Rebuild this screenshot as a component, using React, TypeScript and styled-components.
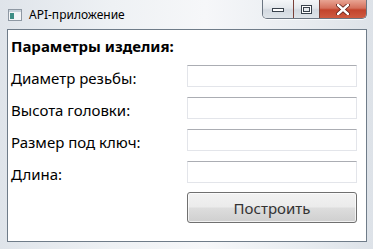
import React from "react";
import styled, { createGlobalStyle } from "styled-components";

const Global = createGlobalStyle`
  html, body { margin: 0; padding: 0; background: #ffffff; }
  body { font-family: "Noto Sans", "Open Sans", sans-serif; }
`;

const Window = styled.div`
  width: 373px;
  height: 249px;
  box-sizing: border-box;
  display: flex;
  flex-direction: column;
  background: linear-gradient(90deg, #dfe4ea 0%, #eef1f4 30%, #f6f7f9 55%, #e9edf1 80%, #dde2e8 100%);
  overflow: hidden;
`;

const TitleBar = styled.div`
  height: 29px;
  display: flex;
  align-items: flex-start;
  flex-shrink: 0;
`;

const AppIcon = styled.svg`
  margin: 9px 0 0 8px;
  flex-shrink: 0;
`;

const Title = styled.div`
  margin: 7px 0 0 7px;
  font-size: 12px;
  line-height: 16px;
  color: #000;
  flex: 1;
  white-space: nowrap;
`;

const Caption = styled.div`
  display: flex;
  margin-right: 6px;
  height: 18px;
  border: 1px solid #6b7581;
  border-top: none;
  border-radius: 0 0 5px 5px;
  overflow: hidden;
  box-shadow: 0 1px 0 rgba(255, 255, 255, 0.8);
`;

const CapButton = styled.div<{ $w: number; $close?: boolean }>`
  width: ${(p) => p.$w}px;
  height: 18px;
  display: flex;
  align-items: center;
  justify-content: center;
  box-sizing: border-box;
  border-left: ${(p) => (p.$close ? "1px solid #6b2a20" : "none")};
  background: ${(p) =>
    p.$close
      ? "linear-gradient(180deg, #e8a493 0%, #d5705c 45%, #c3442c 55%, #cf5b40 100%)"
      : "linear-gradient(180deg, #f4f6f8 0%, #e4e8ec 45%, #d3d9e0 55%, #dfe4e9 100%)"};
  & + & {
    border-left: 1px solid ${(p) => (p.$close ? "#7a4038" : "#8a939d")};
  }
`;

const Client = styled.div`
  margin: 0 6px 0 7px;
  height: 213px;
  box-sizing: border-box;
  border: 1px solid #6f7c89;
  background: #ffffff;
  display: grid;
  grid-template-columns: 1fr 170px;
  grid-template-rows: 25px repeat(4, 22px) 31px;
  row-gap: 10px;
  padding: 0 9px 0 3px;
  font-size: 15px;
  color: #000;
`;

const Heading = styled.div`
  grid-column: 1 / -1;
  font-weight: 700;
  line-height: 20px;
  padding-top: 6px;
`;

const Label = styled.label`
  align-self: center;
  line-height: 20px;
  padding-top: 3px;
  white-space: nowrap;
`;

const Field = styled.input`
  width: 170px;
  height: 22px;
  box-sizing: border-box;
  margin: 0;
  border: 1px solid #e3e5ea;
  border-top-color: #abadb3;
  background: #fff;
  outline: none;
  padding: 0 3px;
  font: inherit;
`;

const BuildButton = styled.button`
  grid-column: 2;
  margin: -1px 0 0 0;
  width: 170px;
  height: 31px;
  box-sizing: border-box;
  border: 1px solid #707070;
  border-radius: 3px;
  background: linear-gradient(180deg, #f2f2f2 0%, #ebebeb 48%, #dddddd 52%, #cfcfcf 100%);
  box-shadow: inset 0 0 0 1px rgba(255, 255, 255, 0.7);
  font-family: inherit;
  font-size: 15px;
  color: #333333;
  padding: 0;
  cursor: default;
`;

const rows = ["Диаметр резьбы:", "Высота головки:", "Размер под ключ:", "Длина:"];

export default function App() {
  return (
    <>
      <Global />
      <Window>
        <TitleBar>
          <AppIcon width="14" height="12" viewBox="0 0 14 12">
            <rect x="0.5" y="0.5" width="13" height="11" fill="#f4f6f8" stroke="#8e98a3" />
            <rect x="1" y="1" width="12" height="2" fill="#c9d3dc" />
            <rect x="2" y="4" width="4" height="6" fill="#3f8f86" />
          </AppIcon>
          <Title>API-приложение</Title>
          <Caption>
            <CapButton $w={30}>
              <svg width="12" height="6" viewBox="0 0 12 6">
                <rect x="0.5" y="2.5" width="11" height="3" fill="#fff" stroke="#39424c" />
              </svg>
            </CapButton>
            <CapButton $w={26}>
              <svg width="11" height="9" viewBox="0 0 11 9">
                <rect x="0.5" y="0.5" width="10" height="8" fill="#fff" stroke="#39424c" />
                <rect x="2.5" y="2.5" width="6" height="4" fill="#e6eaee" stroke="#39424c" />
              </svg>
            </CapButton>
            <CapButton $w={47} $close>
              <svg width="14" height="11" viewBox="0 0 14 11">
                <path d="M2 1 L12 10 M12 1 L2 10" stroke="#5a1a12" strokeWidth="4" strokeLinecap="round" />
                <path d="M2 1 L12 10 M12 1 L2 10" stroke="#ffffff" strokeWidth="2.4" strokeLinecap="round" />
              </svg>
            </CapButton>
          </Caption>
        </TitleBar>
        <Client>
          <Heading>Параметры изделия:</Heading>
          {rows.map((r) => (
            <React.Fragment key={r}>
              <Label>{r}</Label>
              <Field />
            </React.Fragment>
          ))}
          <BuildButton>Построить</BuildButton>
        </Client>
      </Window>
    </>
  );
}
